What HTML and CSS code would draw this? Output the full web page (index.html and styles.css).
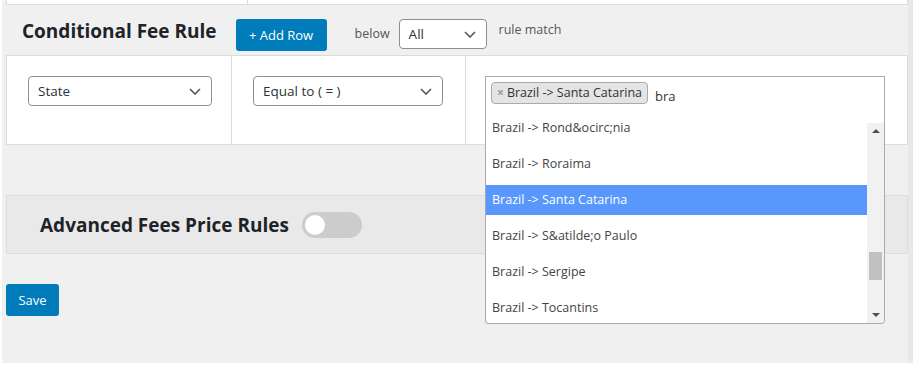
FILE: index.html
```html
<!DOCTYPE html>
<html lang="en">
<head>
  <meta charset="UTF-8" />
  <title>Conditional Fee Rule</title>
  <link rel="stylesheet" href="styles.css">
</head>
<body>
  <div class="wrap">
    <!-- bottom edge of the table above -->
    <div class="prev-table">
      <div class="prev-cell"></div>
      <div class="prev-cell"></div>
    </div>

    <div class="rule-head">
      <h2>Conditional Fee Rule</h2>
      <button class="btn add-btn">+ Add Row</button>
      <span class="below">below</span>
      <div class="select select-all">
        <span>All</span>
        <svg class="chev" width="12" height="7" viewBox="0 0 12 7"><path d="M1 1l5 5 5-5" fill="none" stroke="#50575e" stroke-width="1.6"/></svg>
      </div>
      <span class="rule-match">rule match</span>
    </div>

    <div class="rule-table">
      <div class="cell">
        <div class="select select-state">
          <span>State</span>
          <svg class="chev" width="12" height="7" viewBox="0 0 12 7"><path d="M1 1l5 5 5-5" fill="none" stroke="#50575e" stroke-width="1.6"/></svg>
        </div>
      </div>
      <div class="cell">
        <div class="select select-op">
          <span>Equal to ( = )</span>
          <svg class="chev" width="12" height="7" viewBox="0 0 12 7"><path d="M1 1l5 5 5-5" fill="none" stroke="#50575e" stroke-width="1.6"/></svg>
        </div>
      </div>
      <div class="cell cell-values">
        <div class="s2">
          <span class="s2-tag"><span class="s2-x">×</span>Brazil -&gt; Santa Catarina</span>
          <span class="s2-search">bra</span>

          <div class="s2-drop">
            <div class="s2-list">
              <ul>
                <li>Brazil -&gt; Rond&amp;ocirc;nia</li>
                <li>Brazil -&gt; Roraima</li>
                <li class="active">Brazil -&gt; Santa Catarina</li>
                <li>Brazil -&gt; S&amp;atilde;o Paulo</li>
                <li>Brazil -&gt; Sergipe</li>
                <li>Brazil -&gt; Tocantins</li>
              </ul>
            </div>
            <div class="s2-scroll">
              <span class="arr arr-up"></span>
              <span class="thumb"></span>
              <span class="arr arr-down"></span>
            </div>
          </div>
        </div>
      </div>
    </div>

    <div class="advanced">
      <h2>Advanced Fees Price Rules</h2>
      <span class="toggle"><span class="knob"></span></span>
    </div>

    <button class="btn save-btn">Save</button>
  </div>
</body>
</html>
```

FILE: styles.css
```css
body {
  margin: 0;
  background: #fff;
  font-family: "Open Sans", Arial, sans-serif;
  color: #3c434a;
}

.wrap {
  margin-left: 2px;
  width: 902px;
  height: 363px;
  padding-left: 4px;
  background: #f0f0f1;
  border-right: 5px solid #e8e8e8;
}

.prev-table {
  display: flex;
  height: 4px;
  background: #fff;
  border: 1px solid #dcdcde;
  border-top: none;
}

.prev-cell {
  width: 240px;
  border-right: 1px solid #dcdcde;
}

.prev-cell + .prev-cell {
  flex: 1;
  border-right: none;
}

/* header row */
.rule-head {
  display: flex;
  align-items: flex-start;
  height: 50px;
  padding-left: 16px;
}

.rule-head h2 {
  margin: 14px 0 0;
  font-size: 19px;
  line-height: 24px;
  color: #1d2327;
}

.btn {
  font-family: inherit;
  background: #007cba;
  color: #fff;
  border: none;
  border-radius: 3px;
  cursor: pointer;
}

.add-btn {
  margin: 14px 0 0 19px;
  width: 91px;
  height: 32px;
  font-size: 13px;
}

.below {
  margin: 20px 0 0 28px;
  font-size: 12.5px;
  line-height: 18px;
  color: #50575e;
}

.select {
  display: flex;
  align-items: center;
  justify-content: space-between;
  box-sizing: border-box;
  height: 30px;
  padding: 0 10px 0 9px;
  background: #fff;
  border: 1px solid #8c8f94;
  border-radius: 4px;
  font-size: 13.5px;
  color: #2c3338;
}

.select-all {
  margin: 14px 0 0 9px;
  width: 88px;
}

.rule-match {
  margin: 16px 0 0 12px;
  font-size: 12.5px;
  line-height: 18px;
  color: #50575e;
}

/* rule table */
.rule-table {
  display: grid;
  grid-template-columns: 224px 234px 1fr;
  background: #fff;
  border: 1px solid #dcdcde;
}

.cell {
  padding: 20px 21px;
}

.cell + .cell {
  border-left: 1px solid #dcdcde;
}

.cell-values {
  padding-left: 19px;
}

.select-state {
  width: 184px;
}

.select-op {
  width: 190px;
}

/* select2 style multi picker */
.s2 {
  position: relative;
  display: flex;
  align-items: flex-start;
  box-sizing: border-box;
  width: 400px;
  height: 48px;
  padding: 5px 0 0 5px;
  border: 1px solid #aaa;
  border-bottom-color: #ddd;
  font-size: 12.5px;
}

.s2-tag {
  box-sizing: border-box;
  height: 22px;
  padding: 0 5px;
  line-height: 20px;
  background: #e4e4e4;
  border: 1px solid #aaa;
  border-radius: 4px;
  color: #333;
}

.s2-x {
  margin-right: 3px;
  color: #999;
  font-weight: bold;
  font-size: 12px;
}

.s2-search {
  margin: 5px 0 0 7px;
  line-height: 18px;
  font-size: 13px;
  color: #333;
}

.s2-drop {
  position: absolute;
  top: 46px;
  left: -1px;
  z-index: 10;
  display: flex;
  width: 400px;
  height: 201px;
  box-sizing: border-box;
  background: #fff;
  border: 1px solid #aaa;
  border-top: none;
  border-radius: 0 0 4px 4px;
  overflow: hidden;
}

.s2-list {
  flex: 1;
  overflow: hidden;
}

.s2-list ul {
  display: flex;
  flex-direction: column;
  gap: 6px;
  list-style: none;
  margin: -10px 0 0;
  padding: 0;
}

.s2-list li {
  padding: 6px 6px;
  line-height: 18px;
  color: #444;
}

.s2-list li.active {
  background: #5897fb;
  color: #fff;
}

.s2-scroll {
  position: relative;
  width: 17px;
  background: #f1f1f1;
}

.arr {
  position: absolute;
  left: 5px;
  width: 0;
  height: 0;
  border-left: 4px solid transparent;
  border-right: 4px solid transparent;
}

.arr-up {
  top: 6px;
  border-bottom: 4px solid #505050;
}

.arr-down {
  bottom: 6px;
  border-top: 4px solid #505050;
}

.thumb {
  position: absolute;
  left: 2px;
  top: 129px;
  width: 13px;
  height: 28px;
  background: #c1c1c1;
}

/* advanced section */
.advanced {
  display: flex;
  align-items: center;
  box-sizing: border-box;
  height: 59px;
  margin-top: 50px;
  padding-left: 33px;
  background: #e9e9ea;
  border: 1px solid #dcdcde;
}

.advanced h2 {
  margin: 0;
  font-size: 19px;
  color: #1d2327;
}

.toggle {
  display: flex;
  align-items: center;
  margin-left: 13px;
  width: 60px;
  height: 26px;
  padding: 0 3px;
  box-sizing: border-box;
  background: #ccc;
  border-radius: 13px;
}

.knob {
  width: 20px;
  height: 20px;
  border-radius: 50%;
  background: #fff;
}

.save-btn {
  display: block;
  margin-top: 30px;
  width: 53px;
  height: 32px;
  font-size: 13px;
}
```
